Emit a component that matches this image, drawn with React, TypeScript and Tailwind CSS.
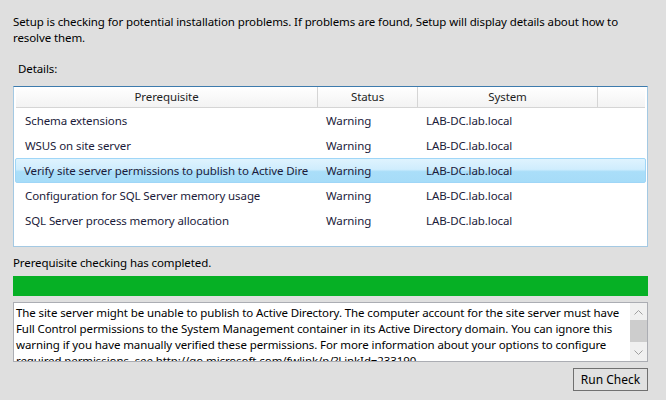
import React from 'react'

type Row = { name: string; status: string; system: string; selected?: boolean }

const ROWS: Row[] = [
  { name: 'Schema extensions', status: 'Warning', system: 'LAB-DC.lab.local' },
  { name: 'WSUS on site server', status: 'Warning', system: 'LAB-DC.lab.local' },
  {
    name: 'Verify site server permissions to publish to Active Dire',
    status: 'Warning',
    system: 'LAB-DC.lab.local',
    selected: true,
  },
  { name: 'Configuration for SQL Server memory usage', status: 'Warning', system: 'LAB-DC.lab.local' },
  { name: 'SQL Server process memory allocation', status: 'Warning', system: 'LAB-DC.lab.local' },
]

// wrapped the way the multiline box lays it out
const DETAIL_LINES = [
  'The site server might be unable to publish to Active Directory. The computer account for the site server must have',
  'Full Control permissions to the System Management container in its Active Directory domain. You can ignore this',
  'warning if you have manually verified these permissions. For more information about your options to configure',
  'required permissions, see http://go.microsoft.com/fwlink/p/?LinkId=233190.',
]

function Chevron({ up }: { up?: boolean }) {
  return (
    <svg width="9" height="6" viewBox="0 0 9 6" className="block">
      <path
        d={up ? 'M0.5 5.5 L4.5 1.5 L8.5 5.5' : 'M0.5 0.5 L4.5 4.5 L8.5 0.5'}
        fill="none"
        stroke="#a0a0a0"
        strokeWidth="1"
      />
    </svg>
  )
}

function HeaderCell({ label, w, last }: { label: string; w: string; last?: boolean }) {
  return (
    <div
      className={`${w} flex h-full shrink-0 items-center justify-center overflow-hidden whitespace-nowrap ${
        last ? '' : 'border-r border-[#d5d5d5]'
      }`}
    >
      {label}
    </div>
  )
}

export default function App() {
  return (
    <div
      className="flex h-[400px] w-[666px] flex-col bg-[#dfdfdf] pl-[13px] pr-[18px] text-[11.5px] tracking-[-0.1px] text-black"
      style={{ fontFamily: '"Noto Sans", "Segoe UI", sans-serif' }}
    >
      <p className="mt-[14px] leading-[16px]">
        Setup is checking for potential installation problems. If problems are found, Setup will display details about how to
        resolve them.
      </p>

      <div className="ml-[5px] mt-[15px] leading-[16px]">Details:</div>

      {/* prerequisite list */}
      <div className="mt-[9px] flex h-[161px] flex-col border border-[#a4c9e3] border-t-[#3d7bad] bg-white px-[2px]">
        <div className="flex h-[21px] shrink-0 border-b border-[#d5d5d5] bg-gradient-to-b from-white to-[#f3f3f3] text-[#1e1e1e]">
          <HeaderCell label="Prerequisite" w="w-[302px]" />
          <HeaderCell label="Status" w="w-[100px]" />
          <HeaderCell label="System" w="w-[180px]" />
          <HeaderCell label="" w="flex-1" last />
        </div>
        {ROWS.map((r) => (
          <div
            key={r.name}
            className={`flex h-[25px] shrink-0 items-center text-[#1b1b3a] ${
              r.selected
                ? '-mx-[1px] rounded-[2px] border border-[#9fd6f7] bg-[linear-gradient(#dff3fe_0%,#cfedfd_45%,#aadef9_55%,#a6dcf8_100%)]'
                : ''
            }`}
          >
            <div className={`w-[302px] shrink-0 overflow-hidden whitespace-nowrap ${r.selected ? 'pl-[8px]' : 'pl-[9px]'}`}>
              {r.name}
            </div>
            <div className="w-[100px] shrink-0 pl-[8px]">{r.status}</div>
            <div className="w-[180px] shrink-0 pl-[8px]">{r.system}</div>
          </div>
        ))}
      </div>

      <div className="mt-[8px] leading-[16px]">Prerequisite checking has completed.</div>

      <div className="mt-[5px] h-[20px] shrink-0 bg-[#06b025]" />

      {/* detail text with scrollbar */}
      <div className="mt-[6px] flex h-[60px] shrink-0 border border-[#abadb3] bg-white">
        <div className="h-full flex-1 overflow-hidden pl-[2px] pr-[2px] pt-[2px] leading-[16px]">
          {DETAIL_LINES.map((l) => (
            <div key={l} className="whitespace-nowrap">
              {l}
            </div>
          ))}
        </div>
        <div className="flex w-[17px] shrink-0 flex-col items-center bg-[#f0f0f0]">
          <div className="flex h-[17px] items-center justify-center">
            <Chevron up />
          </div>
          <div className="h-[22px] w-[17px] bg-[#cdcdcd]" />
          <div className="flex-1" />
          <div className="flex h-[17px] items-center justify-center">
            <Chevron />
          </div>
        </div>
      </div>

      <div className="mt-[6px] flex justify-end">
        <button className="h-[23px] w-[75px] border border-[#707070] bg-[#e1e1e1] text-[12px] leading-none tracking-normal">
          Run Check
        </button>
      </div>
    </div>
  )
}
